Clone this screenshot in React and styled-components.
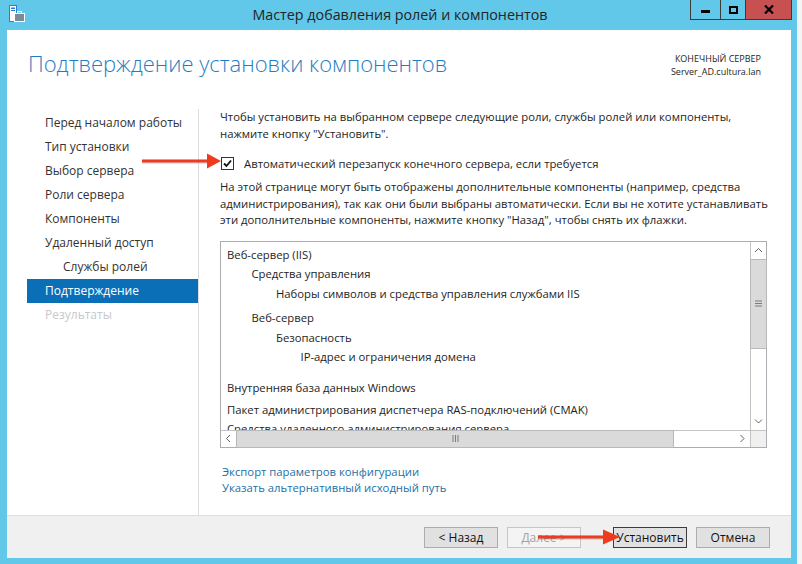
import styled, { createGlobalStyle } from "styled-components";

const GlobalStyle = createGlobalStyle`
  html, body {
    margin: 0;
    padding: 0;
    background: #f4f4f4;
    overflow: hidden;
  }
  body {
    font-family: "Open Sans", "Noto Sans", sans-serif;
    font-size: 11.3px;
    color: #1e1e1e;
  }
`;

const Screen = styled.div`
  position: relative;
  width: 802px;
  height: 564px;
  display: flex;
`;

const Window = styled.div`
  width: 797px;
  height: 564px;
  background: #62c8e9;
  padding: 0 6px 6px 7px;
  box-sizing: border-box;
  display: flex;
  flex-direction: column;
`;

const TitleBar = styled.div`
  height: 30px;
  display: grid;
  grid-template-columns: 1fr auto 1fr;
  align-items: start;
  margin: 0 -6px 0 -7px;
`;

const AppIcon = styled.div`
  padding: 5px 0 0 9px;
`;

const Title = styled.div`
  font-size: 14.3px;
  color: #242424;
  line-height: 30px;
  padding-left: 3px;
`;

const Controls = styled.div`
  justify-self: end;
  display: flex;
  margin-right: 5px;
  border: 1px solid #3a3a3a;
  border-top: none;
  height: 20px;
  box-sizing: border-box;
`;

const Ctrl = styled.div`
  width: ${(p) => p.$w}px;
  height: 100%;
  background: ${(p) => (p.$close ? "#c75050" : "transparent")};
  border-left: ${(p) => (p.$first ? "none" : "1px solid #3a3a3a")};
  display: flex;
  align-items: center;
  justify-content: center;
  box-sizing: border-box;
`;

const Content = styled.div`
  flex: 1;
  background: #fff;
  display: flex;
  flex-direction: column;
  min-height: 0;
`;

const Header = styled.div`
  display: flex;
  justify-content: space-between;
  align-items: flex-start;
  padding: 18px 30px 0 21px;
  height: 79px;
  box-sizing: border-box;
`;

const PageTitle = styled.h1`
  margin: 0;
  font-weight: 300;
  font-size: 22px;
  line-height: 30px;
  color: #1f7ec2;
`;

const ServerInfo = styled.div`
  text-align: right;
  font-size: 9px;
  line-height: 13px;
  padding-top: 4px;
  color: #1e1e1e;
`;

const Body = styled.div`
  flex: 1;
  display: flex;
  min-height: 0;
`;

const Nav = styled.nav`
  width: 192px;
  padding: 2px 0 0 20px;
  box-sizing: border-box;
  border-right: 1px solid #dcdcdc;
  display: flex;
  flex-direction: column;
`;

const NavItem = styled.div`
  height: 24px;
  line-height: 24px;
  width: 171px;
  padding-left: ${(p) => 18 + p.$level * 18}px;
  box-sizing: border-box;
  font-size: 12px;
  color: ${(p) => (p.$active ? "#fff" : p.$disabled ? "#c8c8c8" : "#333")};
  background: ${(p) => (p.$active ? "#0a6fb7" : "transparent")};
`;

const Main = styled.div`
  flex: 1;
  padding-left: 21px;
  padding-right: 23px;
  display: flex;
  flex-direction: column;
  white-space: nowrap;
`;

const Text = styled.p`
  margin: ${(p) => p.$mt || 0}px 0 0;
  line-height: 16.5px;
  color: #1e1e1e;
`;

const CheckRow = styled.label`
  display: flex;
  align-items: center;
  gap: 10px;
  margin-top: 13px;
  height: 16px;
  padding-left: 1px;
`;

const CheckBox = styled.span`
  width: 13px;
  height: 13px;
  border: 1px solid #333;
  box-sizing: border-box;
  background: #fff;
  display: flex;
  align-items: center;
  justify-content: center;
`;

const ListBox = styled.div`
  margin-top: 12px;
  width: 547px;
  height: 207px;
  border: 1px solid #abadb3;
  box-sizing: border-box;
  display: grid;
  grid-template-columns: 1fr 16px;
  grid-template-rows: 1fr 17px;
`;

const ListArea = styled.div`
  overflow: hidden;
  padding: 3px 0 0 6px;
`;

const ListItem = styled.div`
  line-height: 19.5px;
  margin-top: ${(p) => p.$gap || 0}px;
  padding-left: ${(p) => p.$level * 24.5}px;
`;

const VScroll = styled.div`
  border-left: 1px solid #c4c4c4;
  display: flex;
  flex-direction: column;
  background: #fff;
`;

const HScroll = styled.div`
  border-top: 1px solid #c4c4c4;
  display: flex;
  background: #fff;
`;

const Arrow = styled.div`
  width: ${(p) => (p.$h ? "15px" : "100%")};
  height: ${(p) => (p.$h ? "100%" : "17px")};
  display: flex;
  align-items: center;
  justify-content: center;
  flex-shrink: 0;
`;

const VThumb = styled.div`
  height: 88px;
  background: #dadada;
  border: 1px solid #b8b8b8;
  margin: 0 -1px;
  display: flex;
  align-items: center;
  justify-content: center;
`;

const HThumb = styled.div`
  width: 436px;
  background: #dadada;
  border: 1px solid #b8b8b8;
  margin: -1px 0;
  display: flex;
  align-items: center;
  justify-content: center;
`;

const Spacer = styled.div`
  flex: 1;
`;

const Corner = styled.div`
  background: #f0f0f0;
  border-top: 1px solid #c4c4c4;
  border-left: 1px solid #c4c4c4;
`;

const Links = styled.div`
  margin-top: 16px;
  padding-left: 2px;
  display: flex;
  flex-direction: column;
  align-items: flex-start;
`;

const Link = styled.a`
  color: #1e6fa6;
  line-height: 16.5px;
  text-decoration: none;
`;

const Footer = styled.div`
  height: 43px;
  flex-shrink: 0;
  border-top: 1px solid #dedede;
  background: #f0f0f0;
  box-sizing: border-box;
  display: flex;
  justify-content: flex-end;
  align-items: flex-start;
  gap: 9px;
  padding: 11px 21px 0 0;
`;

const Button = styled.button`
  width: 74px;
  height: 21px;
  padding: 0;
  font-family: inherit;
  font-size: 12px;
  margin-right: ${(p) => p.$after || 0}px;
  background: ${(p) => (p.disabled ? "#f4f4f4" : "#e1e1e1")};
  color: ${(p) => (p.disabled ? "#a3a3a3" : "#111")};
  border: 1px solid
    ${(p) => (p.$default ? "#3c3c3c" : p.disabled ? "#c6c6c6" : "#adadad")};
`;

const Annotation = styled.svg`
  position: absolute;
  left: ${(p) => p.$x}px;
  top: ${(p) => p.$y}px;
  overflow: visible;
`;

const nav = [
  { label: "Перед началом работы" },
  { label: "Тип установки" },
  { label: "Выбор сервера" },
  { label: "Роли сервера" },
  { label: "Компоненты" },
  { label: "Удаленный доступ" },
  { label: "Службы ролей", level: 1 },
  { label: "Подтверждение", active: true },
  { label: "Результаты", disabled: true },
];

const features = [
  { label: "Веб-сервер (IIS)", level: 0 },
  { label: "Средства управления", level: 1 },
  { label: "Наборы символов и средства управления службами IIS", level: 2 },
  { label: "Веб-сервер", level: 1, gap: 5 },
  { label: "Безопасность", level: 2 },
  { label: "IP-адрес и ограничения домена", level: 3 },
  { label: "Внутренняя база данных Windows", level: 0, gap: 11 },
  { label: "Пакет администрирования диспетчера RAS-подключений (CMAK)", level: 0, gap: 2.5 },
  { label: "Средства удаленного администрирования сервера", level: 0 },
];

// red annotation arrow drawn over the screenshot
function RedArrow({ x, y, length, head = 16 }) {
  return (
    <Annotation $x={x} $y={y} width={length} height="18" viewBox={`0 0 ${length} 18`}>
      <line x1="0" y1="9.8" x2={length - head + 2} y2="9.8" stroke="rgba(0,0,0,0.14)" strokeWidth="4" />
      <line x1="0" y1="9" x2={length - head + 2} y2="9" stroke="#ee3a1e" strokeWidth="3" />
      <polygon points={`${length - head},1.5 ${length},9 ${length - head},16.5`} fill="#ee3a1e" />
    </Annotation>
  );
}

function Chevron({ dir }) {
  const d = {
    up: "M1 5 L4.5 1.5 L8 5",
    down: "M1 1.5 L4.5 5 L8 1.5",
    left: "M5 1 L1.5 4.5 L5 8",
    right: "M1.5 1 L5 4.5 L1.5 8",
  }[dir];
  const h = dir === "up" || dir === "down";
  return (
    <svg width={h ? 9 : 7} height={h ? 7 : 9} viewBox={h ? "0 0 9 7" : "0 0 7 9"}>
      <path d={d} fill="none" stroke="#606060" strokeWidth="1" />
    </svg>
  );
}

export default function App() {
  return (
    <>
      <GlobalStyle />
      <Screen>
        <Window>
          <TitleBar>
            <AppIcon>
              <svg width="16" height="18" viewBox="0 0 16 18">
                <rect x="0.5" y="0.5" width="7" height="16" fill="#fff" stroke="#2a7fd4" />
                <rect x="2" y="2.5" width="4" height="1.5" fill="#2a7fd4" />
                <rect x="2" y="5" width="4" height="1" fill="#2a7fd4" />
                <rect x="5.5" y="8.5" width="10" height="8" fill="#7e8a96" stroke="#fff" />
                <rect x="8.5" y="6.5" width="4" height="2" fill="none" stroke="#fff" />
              </svg>
            </AppIcon>
            <Title>Мастер добавления ролей и компонентов</Title>
            <Controls>
              <Ctrl $w={29} $first>
                <svg width="9" height="9" viewBox="0 0 9 9">
                  <rect x="0" y="5" width="9" height="3" fill="#000" />
                </svg>
              </Ctrl>
              <Ctrl $w={25}>
                <svg width="9" height="8" viewBox="0 0 9 8">
                  <rect x="1" y="1" width="7" height="6" fill="none" stroke="#000" strokeWidth="2" />
                </svg>
              </Ctrl>
              <Ctrl $w={46} $close>
                <svg width="10" height="9" viewBox="0 0 10 9">
                  <path d="M1 0.5 L9 8.5 M9 0.5 L1 8.5" stroke="#000" strokeWidth="2.2" />
                </svg>
              </Ctrl>
            </Controls>
          </TitleBar>
          <Content>
            <Header>
              <PageTitle>Подтверждение установки компонентов</PageTitle>
              <ServerInfo>
                КОНЕЧНЫЙ СЕРВЕР
                <br />
                Server_AD.cultura.lan
              </ServerInfo>
            </Header>
            <Body>
              <Nav>
                {nav.map((n) => (
                  <NavItem
                    key={n.label}
                    $level={n.level || 0}
                    $active={n.active}
                    $disabled={n.disabled}
                  >
                    {n.label}
                  </NavItem>
                ))}
              </Nav>
              <Main>
                <Text>
                  Чтобы установить на выбранном сервере следующие роли, службы ролей или компоненты,
                  <br />
                  нажмите кнопку "Установить".
                </Text>
                <CheckRow>
                  <CheckBox>
                    <svg width="9" height="9" viewBox="0 0 9 9">
                      <path d="M1 4.5 L3.5 7 L8 1.5" fill="none" stroke="#111" strokeWidth="1.8" />
                    </svg>
                  </CheckBox>
                  Автоматический перезапуск конечного сервера, если требуется
                </CheckRow>
                <Text $mt={8}>
                  На этой странице могут быть отображены дополнительные компоненты (например, средства
                  <br />
                  администрирования), так как они были выбраны автоматически. Если вы не хотите устанавливать
                  <br />
                  эти дополнительные компоненты, нажмите кнопку "Назад", чтобы снять их флажки.
                </Text>
                <ListBox>
                  <ListArea>
                    {features.map((f, i) => (
                      <ListItem key={i} $level={f.level} $gap={f.gap}>
                        {f.label}
                      </ListItem>
                    ))}
                  </ListArea>
                  <VScroll>
                    <Arrow>
                      <Chevron dir="up" />
                    </Arrow>
                    <VThumb>
                      <svg width="7" height="7" viewBox="0 0 7 7">
                        <path d="M0 1 H7 M0 3.5 H7 M0 6 H7" stroke="#7a7a7a" strokeWidth="1" />
                      </svg>
                    </VThumb>
                    <Spacer />
                    <Arrow>
                      <Chevron dir="down" />
                    </Arrow>
                  </VScroll>
                  <HScroll>
                    <Arrow $h>
                      <Chevron dir="left" />
                    </Arrow>
                    <HThumb>
                      <svg width="7" height="7" viewBox="0 0 7 7">
                        <path d="M1 0 V7 M3.5 0 V7 M6 0 V7" stroke="#7a7a7a" strokeWidth="1" />
                      </svg>
                    </HThumb>
                    <Spacer />
                    <Arrow $h>
                      <Chevron dir="right" />
                    </Arrow>
                  </HScroll>
                  <Corner />
                </ListBox>
                <Links>
                  <Link href="#">Экспорт параметров конфигурации</Link>
                  <Link href="#">Указать альтернативный исходный путь</Link>
                </Links>
              </Main>
            </Body>
            <Footer>
              <Button>&lt; Назад</Button>
              <Button disabled $after={23}>
                Далее &gt;
              </Button>
              <Button $default>Установить</Button>
              <Button>Отмена</Button>
            </Footer>
          </Content>
        </Window>
        <RedArrow x={142} y={152} length={79} head={14} />
        <RedArrow x={538} y={528} length={82} head={17} />
      </Screen>
    </>
  );
}
